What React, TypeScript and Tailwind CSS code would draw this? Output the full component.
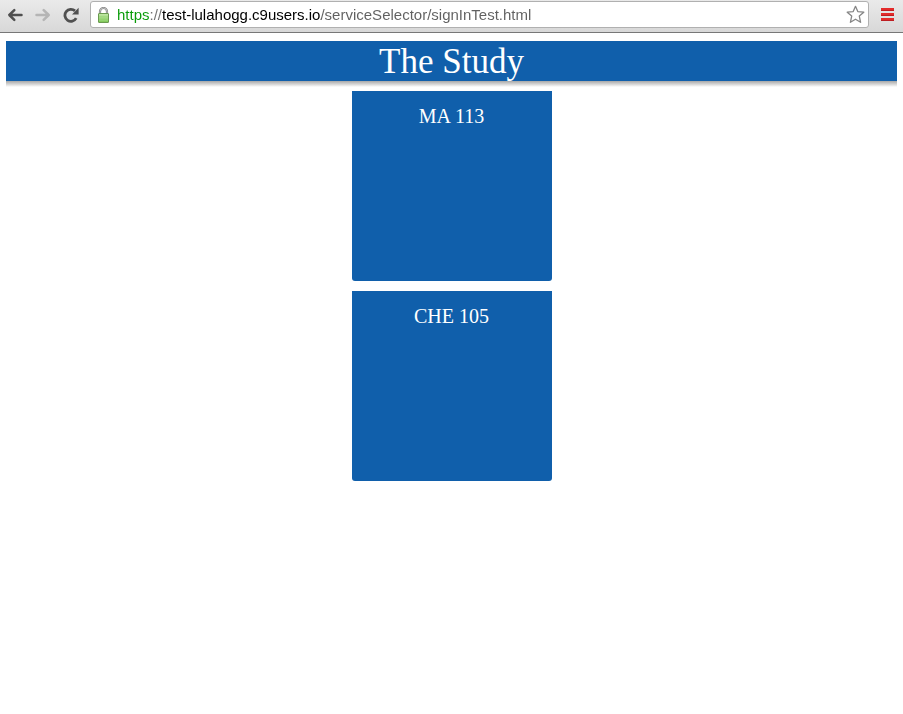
import React from "react";

const courses = ["MA 113", "CHE 105"];

function BackIcon({ color }: { color: string }) {
  return (
    <svg width="16" height="14" viewBox="0 0 16 14" fill="none" stroke={color} strokeWidth="2.5" strokeLinecap="round" aria-hidden="true">
      <path d="M2.5 7H14.5M7.3 2.2L2.3 7L7.3 11.8" strokeLinejoin="round" />
    </svg>
  );
}

function ReloadIcon() {
  return (
    <svg width="16" height="16" viewBox="0 0 16 16" aria-hidden="true">
      <path d="M13.2 11.2A6 6 0 1 1 12 3.9" fill="none" stroke="#505050" strokeWidth="2.8" />
      <path d="M15.6 0.8V7.4H9Z" fill="#505050" />
    </svg>
  );
}

function LockIcon() {
  return (
    <svg width="13" height="16" viewBox="0 0 13 16" className="shrink-0" aria-hidden="true">
      <defs>
        <linearGradient id="lockBody" x1="0" y1="0" x2="0" y2="1">
          <stop offset="0" stopColor="#c3e8a8" />
          <stop offset="1" stopColor="#7cc653" />
        </linearGradient>
      </defs>
      <path d="M3 7.5V4.4a3.5 3.4 0 0 1 7 0V7.5" fill="none" stroke="#858585" strokeWidth="2.2" />
      <path d="M3 7.5V4.4a3.5 3.4 0 0 1 7 0V7.5" fill="none" stroke="#cccccc" strokeWidth="0.8" />
      <rect x="1.5" y="6.5" width="10" height="9" rx="0.5" fill="url(#lockBody)" stroke="#6a9a50" />
      <path d="M2 9.5H11M2 11.5H11M2 13.5H11" stroke="#9bd67a" strokeWidth="0.6" />
    </svg>
  );
}

function StarIcon() {
  return (
    <svg width="19" height="19" viewBox="0 0 19 19" aria-hidden="true">
      <path
        d="M9.5 1.3L11.8 6.6L17.8 7.2L13.3 11.1L14.6 17.3L9.5 14.2L4.4 17.3L5.7 11.1L1.2 7.2L7.2 6.6Z"
        fill="#fff"
        stroke="#858585"
        strokeWidth="1.3"
        strokeLinejoin="round"
      />
    </svg>
  );
}

function MenuIcon() {
  return (
    <svg width="13" height="13" viewBox="0 0 13 13" aria-hidden="true">
      <path d="M0 0H13V3H0ZM0 5H13V8H0ZM0 10H13V13H0Z" fill="#e32b2b" />
      <path d="M0 2H13V3H0ZM0 7H13V8H0ZM0 12H13V13H0Z" fill="#bd1e22" />
    </svg>
  );
}

function BrowserBar() {
  return (
    <div className="flex h-[33px] items-start border-b border-[#777] bg-linear-to-b from-[#eaeaea] to-[#d8d8d8]">
      <div className="flex h-[30px] shrink-0 items-center gap-3 pl-[7px]">
        <button type="button" aria-label="Back">
          <BackIcon color="#505050" />
        </button>
        <button type="button" aria-label="Forward" className="rotate-180">
          <BackIcon color="#b5b5b5" />
        </button>
        <button type="button" aria-label="Reload">
          <ReloadIcon />
        </button>
      </div>
      <div className="ml-[11px] mt-px flex h-[27px] min-w-0 grow items-center rounded-[3px] border border-[#b0b0b0] bg-white pl-[6px] pr-[3px]">
        <LockIcon />
        <input
          type="text"
          aria-label="Address"
          spellCheck={false}
          defaultValue="https://test-lulahogg.c9users.io/serviceSelector/signInTest.html"
          className="ml-[7px] h-6 min-w-0 grow bg-[linear-gradient(90deg,#089b08_33px,#707070_33px,#707070_45px,#000_45px,#000_204px,#606060_204px)] bg-clip-text font-['Liberation_Sans',Arial,sans-serif] text-[15px] text-transparent outline-none"
        />
        <button type="button" aria-label="Bookmark this page">
          <StarIcon />
        </button>
      </div>
      <button type="button" aria-label="Menu" className="ml-3 mr-[9px] flex h-[29px] shrink-0 items-center">
        <MenuIcon />
      </button>
    </div>
  );
}

export default function App() {
  return (
    <div className="min-h-screen bg-white font-['Liberation_Serif','Times_New_Roman',serif]">
      <BrowserBar />
      <div className="px-[6px] pt-2">
        <header className="text-center text-white">
          <h1 className="h-10 bg-[#105fab] text-[35px] leading-[42px]">The Study</h1>
          <div className="h-[6px] bg-linear-to-b from-[#a8a8a8] to-white" />
        </header>
        <main className="flex flex-col items-center gap-[10px] pt-1">
          {courses.map((course) => (
            <button
              key={course}
              type="button"
              className="flex h-[190px] w-[200px] items-start justify-center rounded-b-[3px] bg-[#105fab] pt-[13px] text-xl leading-6 text-white"
            >
              {course}
            </button>
          ))}
        </main>
      </div>
    </div>
  );
}
